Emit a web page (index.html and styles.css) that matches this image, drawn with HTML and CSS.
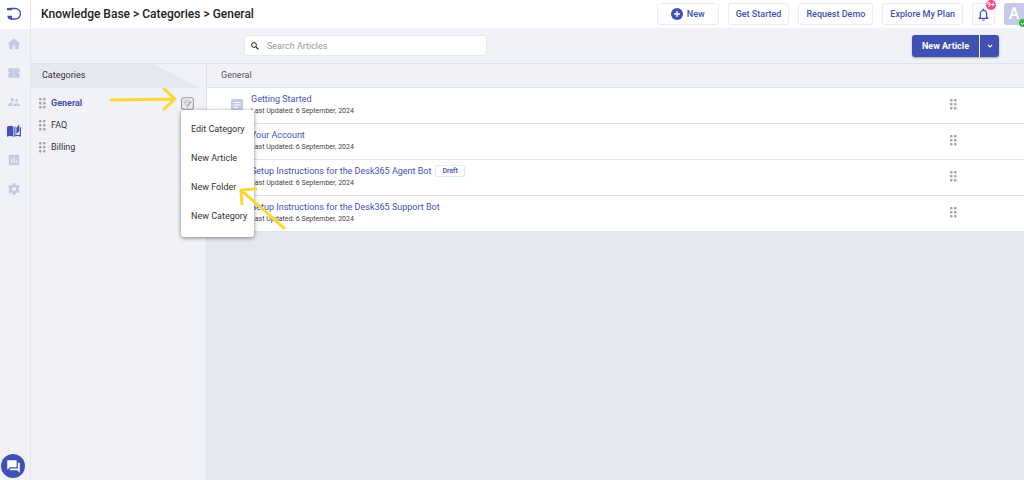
FILE: index.html
```html
<!DOCTYPE html>
<html lang="en">
<head>
<meta charset="utf-8">
<title>Knowledge Base</title>
<link rel="stylesheet" href="styles.css">
</head>
<body>
<svg class="defs" aria-hidden="true">
  <symbol id="grip" viewBox="0 0 7 11"><g fill="currentColor"><rect x="0" y="0" width="2.6" height="2.6" rx=".8"/><rect x="4" y="0" width="2.6" height="2.6" rx=".8"/><rect x="0" y="4" width="2.6" height="2.6" rx=".8"/><rect x="4" y="4" width="2.6" height="2.6" rx=".8"/><rect x="0" y="8" width="2.6" height="2.6" rx=".8"/><rect x="4" y="8" width="2.6" height="2.6" rx=".8"/></g></symbol>
</svg>
<div class="app">
  <nav class="rail" aria-label="Main">
    <a class="logo" href="#" aria-label="Home page"><svg viewBox="0 0 14 14" fill="none" stroke="#3f51b5"><path d="M4 1.500h4.200a4.800 4.800 0 0 1 0 10.500H3.500" stroke-width="1.300"/><path d="M0 2.100h5" stroke-width="2.400"/><path d="M.4 8.800h4.600v3.800H3.500Q.4 12.200.4 8.800z" fill="#3f51b5" stroke="none"/></svg></a>
    <a class="rail-item" href="#" aria-label="Dashboard"><svg viewBox="0 0 24 24"><path d="M10 21v-7h4v7h6v-9h3L12 2 1 12h3v9z"/></svg></a>
    <a class="rail-item" href="#" aria-label="Tickets"><svg viewBox="0 0 24 24"><path d="M22 10V6a2 2 0 0 0-2-2H4a2 2 0 0 0-2 2v4a2 2 0 0 1 0 4v4a2 2 0 0 0 2 2h16a2 2 0 0 0 2-2v-4a2 2 0 0 1 0-4zm-9 7.500h-2v-2h2zm0-4.500h-2v-2h2zm0-4.500h-2v-2h2z"/></svg></a>
    <a class="rail-item" href="#" aria-label="Contacts"><svg viewBox="0 0 24 24"><path d="M16.500 12a2.500 2.500 0 1 0 0-5 2.500 2.500 0 0 0 0 5zM9 11a3 3 0 1 0 0-6 3 3 0 0 0 0 6zm7.500 3c-1.830 0-5.500.920-5.500 2.750V19h11v-2.250c0-1.830-3.670-2.750-5.500-2.750zM9 13c-2.330 0-7 1.170-7 3.500V19h7v-2.250c0-.850.330-2.340 2.370-3.470A12 12 0 0 0 9 13z"/></svg></a>
    <a class="rail-item active" href="#" aria-label="Knowledge base"><svg viewBox="0 0 24 24"><path d="M0 4.500q5.500-3 11-.2V22q-5.500-3-11 0zM12.500 5l2-1v15q4-1.500 7.500 0V5l2 1v16q-6-2.500-11.500 0zM16 6.500L21 1v11.500L16 17z"/></svg></a>
    <a class="rail-item" href="#" aria-label="Reports"><svg viewBox="0 0 24 24"><path d="M19 3H5a2 2 0 0 0-2 2v14a2 2 0 0 0 2 2h14a2 2 0 0 0 2-2V5a2 2 0 0 0-2-2zM9 17H7v-7h2zm4 0h-2V7h2zm4 0h-2v-4h2z"/></svg></a>
    <a class="rail-item" href="#" aria-label="Settings"><svg viewBox="0 0 24 24"><path d="M19.430 12.980c.04-.32.07-.64.07-.98s-.03-.66-.07-.98l2.110-1.650a.5.5 0 0 0 .12-.64l-2-3.460a.5.5 0 0 0-.61-.22l-2.490 1a7.300 7.300 0 0 0-1.690-.98l-.38-2.650A.5.5 0 0 0 14 2h-4a.5.5 0 0 0-.49.420l-.38 2.650c-.61.250-1.170.590-1.690.980l-2.490-1a.5.5 0 0 0-.61.220l-2 3.460a.5.5 0 0 0 .12.640l2.110 1.650a8 8 0 0 0 0 1.960l-2.110 1.650a.5.5 0 0 0-.12.640l2 3.460c.12.220.39.300.61.220l2.490-1c.52.400 1.080.730 1.690.980l.38 2.650c.03.240.24.420.49.420h4c.25 0 .46-.18.49-.42l.38-2.650c.61-.25 1.170-.59 1.690-.98l2.490 1c.23.090.49 0 .61-.22l2-3.460a.5.5 0 0 0-.12-.64zM12 15.500a3.500 3.500 0 1 1 0-7 3.500 3.500 0 0 1 0 7z"/></svg></a>
    <button class="chat" aria-label="Chat"><svg viewBox="0 0 24 24" fill="#fff"><path d="M21 6h-2v9H6v2a1 1 0 0 0 1 1h11l4 4V7a1 1 0 0 0-1-1zm-4 6V3a1 1 0 0 0-1-1H3a1 1 0 0 0-1 1v14l4-4h10a1 1 0 0 0 1-1z"/></svg></button>
  </nav>
  <div class="main">
    <header class="topbar">
      <h1>Knowledge Base &gt; Categories &gt; General</h1>
      <button class="outline new"><svg viewBox="0 0 12 12"><circle cx="6" cy="6" r="6" fill="#3f51b5"/><path d="M6 3v6M3 6h6" stroke="#fff" stroke-width="1.400"/></svg>New</button>
      <button class="outline">Get Started</button>
      <button class="outline">Request Demo</button>
      <button class="outline">Explore My Plan</button>
      <button class="outline bell" aria-label="Notifications"><svg viewBox="0 0 24 24" fill="#3f51b5"><path d="M12 22a2 2 0 0 0 2-2h-4a2 2 0 0 0 2 2zm6-6v-5c0-3.070-1.630-5.640-4.500-6.320V4a1.500 1.500 0 0 0-3 0v.680C7.640 5.360 6 7.920 6 11v5l-2 2v1h16v-1zm-2 1H8v-6c0-2.480 1.510-4.500 4-4.500s4 2.020 4 4.500z"/></svg><span class="count">9+</span></button>
      <button class="avatar" aria-label="Account, online">A<svg viewBox="0 0 8 8"><circle cx="4" cy="4" r="4" fill="#35b335"/><path d="M2 4l1.500 1.500L6 3" fill="none" stroke="#fff"/></svg></button>
    </header>
    <div class="toolbar">
      <label class="search"><svg viewBox="0 0 10 10" fill="none" stroke="#222"><circle cx="4" cy="4" r="2.400" stroke-width="1"/><path d="M6 6l2.400 2.400" stroke-width="1.300"/></svg><input type="search" placeholder="Search Articles" aria-label="Search Articles"></label>
      <div class="split"><button class="primary">New Article</button><button class="primary more" aria-label="More"><svg viewBox="0 0 8 8" fill="none" stroke="#fff" stroke-width="1.100"><path d="M1.900 3l2.100 2L6.100 3"/></svg></button></div>
    </div>
    <div class="content">
      <aside class="categories">
        <h2>Categories</h2>
        <ul>
          <li class="selected"><svg class="grip"><use href="#grip"/></svg><a href="#">General</a>
            <div class="edit-wrap">
              <button class="edit" aria-label="Category actions" aria-expanded="true"><svg viewBox="0 0 13 13" fill="none" stroke="#a4a5aa" stroke-width=".8"><rect x=".7" y=".7" width="11.600" height="11.600" rx="2" stroke="#9a9ca2" stroke-width="1.100" fill="#eeeff2"/><path d="M8.800 4Q7 3 4.500 3.500T4 7l2 2 .5 1.500M4.500 5.500h3"/><path d="M6.500 9l3.800-4.500" stroke-width="1.600"/></svg></button>
              <div class="menu" role="menu">
                <button role="menuitem">Edit Category</button>
                <button role="menuitem">New Article</button>
                <button role="menuitem">New Folder</button>
                <button role="menuitem">New Category</button>
                <svg class="arrow arrow-folder" viewBox="0 0 50 46"><path d="M46 42L4 5M18 3L3 4l1 14"/></svg>
              </div>
              <svg class="arrow arrow-edit" viewBox="0 0 70 26"><path d="M3 14l64-1M56 3l11 10-11 10"/></svg>
            </div>
          </li>
          <li><svg class="grip"><use href="#grip"/></svg><a href="#">FAQ</a></li>
          <li><svg class="grip"><use href="#grip"/></svg><a href="#">Billing</a></li>
        </ul>
      </aside>
      <main class="articles">
        <h2>General</h2>
        <article><svg class="doc" viewBox="0 0 12 12"><rect width="12" height="12" rx="1.500" fill="#c5cae9"/><path d="M2.500 3.500h7M2.500 6h7M2.500 8.500h4.500" stroke="#fff" stroke-width="1.200"/></svg><div class="info"><div class="title"><a href="#">Getting Started</a></div><p>Last Updated: 6 September, 2024</p></div><svg class="grip"><use href="#grip"/></svg></article>
        <article><svg class="doc" viewBox="0 0 12 12"><rect width="12" height="12" rx="1.500" fill="#c5cae9"/></svg><div class="info"><div class="title"><a href="#">Your Account</a></div><p>Last Updated: 6 September, 2024</p></div><svg class="grip"><use href="#grip"/></svg></article>
        <article><svg class="doc" viewBox="0 0 12 12"><rect width="12" height="12" rx="1.500" fill="#c5cae9"/></svg><div class="info"><div class="title"><a href="#">Setup Instructions for the Desk365 Agent Bot</a><span class="tag">Draft</span></div><p>Last Updated: 6 September, 2024</p></div><svg class="grip"><use href="#grip"/></svg></article>
        <article><svg class="doc" viewBox="0 0 12 12"><rect width="12" height="12" rx="1.500" fill="#c5cae9"/></svg><div class="info"><div class="title"><a href="#">Setup Instructions for the Desk365 Support Bot</a></div><p>Last Updated: 6 September, 2024</p></div><svg class="grip"><use href="#grip"/></svg></article>
      </main>
    </div>
  </div>
</div>
</body>
</html>
```
FILE: styles.css
```css
* { box-sizing: border-box; }
body { margin: 0; font: 9px/12px Roboto, sans-serif; color: #333; overflow: hidden; }
h1, h2, p, ul { margin: 0; padding: 0; }
ul { list-style: none; }
a { text-decoration: none; color: inherit; }
button { font: inherit; color: inherit; border: 0; padding: 0; background: none; cursor: pointer; }
svg { display: block; flex: none; }
.defs { position: absolute; width: 0; height: 0; }
.app { display: flex; min-height: 100vh; background: #f1f2f7; }

.rail { width: 31px; flex: none; display: flex; flex-direction: column; border-right: 1px solid #e4e6ef; }
.logo { height: 29px; background: #fff; padding: 7px 0 0 7px; }
.logo svg { width: 14px; height: 14px; }
.rail-item { height: 29px; display: flex; align-items: center; padding-left: 7px; }
.rail-item svg { width: 14px; height: 14px; fill: #c5cae3; }
.rail-item.active svg { fill: #3f51b5; }
.chat { width: 24px; height: 24px; margin: auto 0 2px 1px; border-radius: 50%; background: #3f51b5; display: grid; place-items: center; }
.chat svg { width: 15px; height: 15px; }

.main { flex: 1; min-width: 0; display: flex; flex-direction: column; }
.topbar { height: 28px; display: flex; align-items: center; background: #fff; padding-left: 10px; }
.topbar h1 { flex: 1; font-size: 12px; line-height: 16px; font-weight: 500; color: #222; }
.outline { height: 22px; padding: 0 7px; margin-right: 9px; border: 1px solid #ebecf1; border-radius: 3px; color: #3f51b5; font-weight: 500; display: flex; align-items: center; justify-content: center; flex: none; }
.new { gap: 4px; padding: 0 13px; }
.new svg { width: 12px; height: 12px; }
.bell { position: relative; width: 23px; padding: 0; }
.bell svg { width: 15px; height: 15px; }
.count { position: absolute; top: -4px; right: -2px; width: 10px; height: 10px; border-radius: 50%; background: #ff4081; color: #fff; font-size: 7px; line-height: 10px; text-align: center; }
.avatar { position: relative; width: 20px; height: 22px; flex: none; background: #c5cae9; border-radius: 3px 0 0 3px; color: #fff; font-size: 16px; font-weight: 500; }
.avatar svg { position: absolute; right: -3px; bottom: -2px; width: 8px; height: 8px; }

.toolbar { height: 36px; display: flex; align-items: center; justify-content: space-between; padding: 0 25px 0 213px; border-bottom: 1px solid #dfe1ec; }
.search { width: 243px; height: 21px; display: flex; align-items: center; gap: 7px; padding: 0 5px; background: #fff; border: 1px solid #e8e9f0; border-radius: 3px; }
.search svg { width: 10px; height: 10px; }
.search input { flex: 1; min-width: 0; border: 0; outline: 0; padding: 0; font: inherit; background: none; }
.search input::placeholder { color: #999; }
.split { display: flex; gap: 1px; box-shadow: 0 1px 2px #0005; border-radius: 3px; }
.primary { height: 22px; padding: 0 10px; background: #3f51b5; color: #fff; font-weight: 700; border-radius: 3px 0 0 3px; }
.more { width: 19px; padding: 0; display: grid; place-items: center; border-radius: 0 3px 3px 0; }
.more svg { width: 8px; height: 8px; }

.content { flex: 1; display: flex; }
.categories { width: 175px; flex: none; }
.content h2 { height: 24px; font-size: 9px; line-height: 23px; font-weight: 400; }
.categories h2 { padding-left: 11px; background: #e5e8f1; clip-path: polygon(0 0, 70% 0, 97% 100%, 0 100%); color: #333; }
.categories ul { padding: 4px 12px 0 8px; }
.categories li { display: flex; align-items: center; height: 22px; gap: 5px; }
.grip { width: 7px; height: 11px; color: #a5a5a8; }
.selected > a { color: #3f51b5; font-weight: 700; }
.edit-wrap { position: relative; margin-left: auto; }
.edit { display: block; }
.edit svg { width: 13px; height: 13px; }
.menu { position: absolute; z-index: 2; left: 0; top: 13px; width: 73px; padding: 5px 0 6px; background: #fff; border-radius: 3px; box-shadow: 0 1px 4px #0007; }
.menu button { display: block; width: 100%; height: 29px; padding-left: 10px; text-align: left; white-space: nowrap; }
.arrow { position: absolute; fill: none; stroke: #fdd835; stroke-width: 3; stroke-linecap: round; stroke-linejoin: round; }
.arrow-folder { left: 57px; top: 76px; width: 50px; height: 46px; }
.arrow-edit { right: 16px; top: -11px; width: 70px; height: 26px; }

.articles { flex: 1; min-width: 0; background: #e5e8f1; border-left: 1px solid #dfe1ec; }
.articles h2 { padding-left: 14px; background: #f1f2f7; border-bottom: 1px solid #dfe1ec; color: #555; }
.articles article { height: 36px; display: flex; align-items: center; padding: 0 67px 2px 24px; background: #fff; border-bottom: 1px solid #dfe1ec; }
.doc { width: 12px; height: 12px; margin-right: 8px; }
.info { flex: 1; min-width: 0; }
.title { display: flex; align-items: center; gap: 4px; height: 12px; color: #3f51b5; }
.tag { padding: 0 6px; border: 1px solid #dcebfb; border-radius: 2px; font-size: 7px; line-height: 10px; font-weight: 500; }
.info p { font-size: 7px; color: #444; }
```
